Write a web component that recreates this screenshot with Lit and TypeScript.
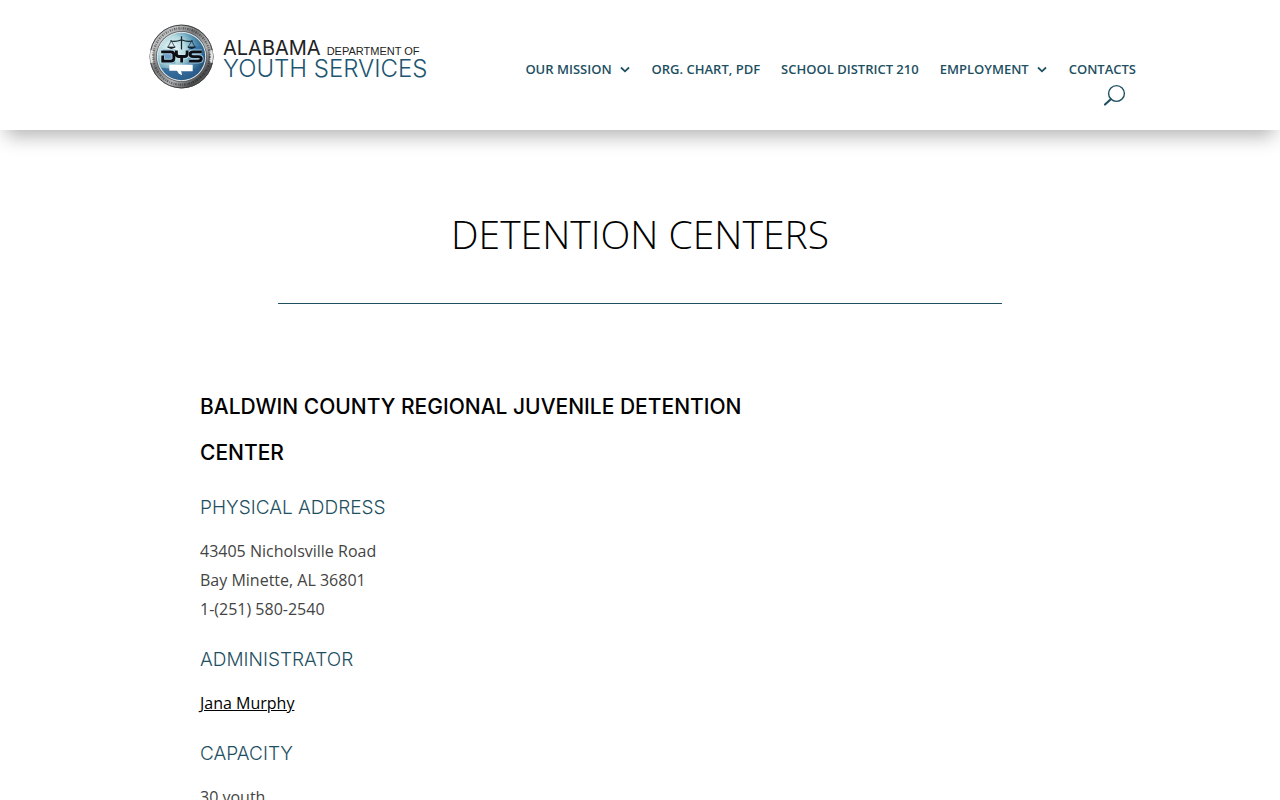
import { LitElement, html, css, svg } from "lit";
import { customElement } from "lit/decorators.js";

interface MenuItem {
  label: string;
  expandable?: boolean;
}

const MENU: MenuItem[] = [
  { label: "OUR MISSION", expandable: true },
  { label: "ORG. CHART, PDF" },
  { label: "SCHOOL DISTRICT 210" },
  { label: "EMPLOYMENT", expandable: true },
  { label: "CONTACTS" },
];

const chevron = html`<svg class="chevron" viewBox="0 0 10 7" aria-hidden="true">
  <path d="M1 1.5 5 5.300 9 1.5" fill="none" stroke="currentColor" stroke-width="1.8" />
</svg>`;

const seal = svg`
  <defs>
    <linearGradient id="rim" x1="0" y1="0" x2="1" y2="1">
      <stop offset="0" stop-color="#6a6c6e" />
      <stop offset=".2" stop-color="#c4c6c8" />
      <stop offset=".4" stop-color="#77797b" />
      <stop offset=".62" stop-color="#b5b7b9" />
      <stop offset=".8" stop-color="#4c4e50" />
      <stop offset="1" stop-color="#77797b" />
    </linearGradient>
    <radialGradient id="disc" cx=".3" cy=".35" r=".8">
      <stop offset="0" stop-color="#f4fafb" />
      <stop offset=".35" stop-color="#b4dae0" />
      <stop offset=".65" stop-color="#4a8aae" />
      <stop offset="1" stop-color="#163c60" />
    </radialGradient>
  </defs>
  <circle cx="32" cy="32" r="31.5" fill="url(#rim)" />
  <circle cx="32" cy="32" r="30.9" fill="none" stroke="#3a3a3a" stroke-width=".9" />
  <path d="M3 38a29.500 29.500 0 0 1 0-12M61 26a29.500 29.500 0 0 1 0 12" stroke="#e6e6e6" stroke-width="3" fill="none" />
  <circle cx="32" cy="32" r="27.800" fill="none" stroke="#1c1c1c" stroke-opacity=".5" stroke-width="2.200" stroke-dasharray="1.500 .9 .8 1.200" />
  <circle cx="32" cy="32" r="25" fill="#55595c" />
  <circle cx="32" cy="32" r="24.300" fill="#dfe5e8" />
  <circle cx="32" cy="32" r="23.300" fill="url(#disc)" />
  <path d="M14 25h12v14H13ZM39 22h12a22 22 0 0 1 2 17H39Z" fill="#2f6fb0" opacity=".6" />
  <path d="M12 43q7 12 20 12t20-12l-8 1H22Z" fill="#2c5f92" opacity=".75" />
  <path d="M32 12v13M21 16.500q5 1.500 11-1 6 2.500 11 1" fill="none" stroke="#16222b" stroke-width="1.200" />
  <path d="M22 16.500 18.500 23h7ZM42 16.500 38.500 23h7Z" fill="none" stroke="#16222b" stroke-width=".7" />
  <path d="M17.500 22.500h9q-4.500 4-9 0ZM37.500 22.500h9q-4.500 4-9 0Z" fill="#16222b" />
  <path d="M20 40h23v6.500H31.500q1 2 1 4l-3-1.500-2-3H20Z" fill="#fff" />
  <g fill="none" stroke="#d7eef5" stroke-opacity=".65" stroke-width="4.600">
    <path d="M13.500 31v5.500h8q3 0 3-2.500v-3.500q0-3-3-3H12M27 26v3.500q0 2.500 2.500 2.500H35q2.500 0 2.500-2.500V26M32.200 32v6M52 27.500h-8.500q-3 0-3 2.300t3 2.300h5q3 0 3 2.200t-3 2.200H39.500" />
  </g>
  <g fill="none" stroke="#0b0f14" stroke-width="2.800">
    <path d="M13.500 31v5.500h8q3 0 3-2.500v-3.500q0-3-3-3H12M27 26v3.500q0 2.500 2.500 2.500H35q2.500 0 2.500-2.500V26M32.200 32v6M52 27.500h-8.500q-3 0-3 2.300t3 2.300h5q3 0 3 2.200t-3 2.200H39.500" />
  </g>`;

@customElement("dys-header")
export class DysHeader extends LitElement {
  static styles = css`
    :host {
      display: block;
      position: relative;
      z-index: 1;
      background: #fff;
      box-shadow: 0 12px 18px -6px rgba(0, 0, 0, 0.3);
      color: #1e5062;
      font-family: "Open Sans", sans-serif;
    }
    .row {
      display: flex;
      justify-content: space-between;
      align-items: flex-start;
      width: 80%;
      margin: 0 auto;
      padding: 24px 16px 22px 21px;
      box-sizing: border-box;
    }
    .logo {
      display: flex;
      gap: 9px;
      flex: none;
      color: inherit;
      text-decoration: none;
    }
    .seal {
      width: 65px;
      height: 65px;
      flex: none;
    }
    .words {
      display: flex;
      flex-direction: column;
      padding-top: 15px;
      font-family: Inter, sans-serif;
      white-space: nowrap;
    }
    .upper {
      display: flex;
      align-items: baseline;
      gap: 6px;
      line-height: 19px;
      color: #222;
    }
    .state {
      font-size: 20px;
      font-weight: 400;
    }
    .dept {
      font-family: "Liberation Sans", sans-serif;
      font-size: 11px;
      line-height: 12px;
    }
    .lower {
      font-size: 24px;
      font-weight: 300;
      line-height: 21px;
      color: #1e5570;
    }
    .side {
      display: flex;
      flex-direction: column;
      align-items: flex-end;
      padding-top: 35px;
    }
    .menu {
      display: flex;
      gap: 21px;
      margin: 0;
      padding: 0;
      list-style: none;
    }
    .link {
      display: flex;
      align-items: center;
      gap: 8px;
      color: inherit;
      font-size: 13px;
      font-weight: 600;
      line-height: 20px;
      text-decoration: none;
      white-space: nowrap;
    }
    .chevron {
      width: 10px;
      height: 7px;
      margin-right: 1px;
    }
    .search {
      display: block;
      margin: 5px 10px 0 0;
      padding: 0;
      border: 0;
      background: none;
      color: inherit;
      cursor: pointer;
    }
    .glass {
      display: block;
      width: 24px;
      height: 24px;
    }
  `;

  render() {
    return html`
      <div class="row">
        <a class="logo" href="#" aria-label="Alabama Department of Youth Services">
          <svg class="seal" viewBox="0 0 64 64" aria-hidden="true">${seal}</svg>
          <span class="words">
            <span class="upper"><span class="state">ALABAMA</span><span class="dept">DEPARTMENT OF</span></span>
            <span class="lower">YOUTH SERVICES</span>
          </span>
        </a>
        <div class="side">
          <nav aria-label="Main">
            <ul class="menu">
              ${MENU.map(
                (item) => html`<li>
                  <a class="link" href="#">${item.label}${item.expandable ? chevron : ""}</a>
                </li>`
              )}
            </ul>
          </nav>
          <button class="search" type="button" aria-label="Search">
            <svg class="glass" viewBox="0 0 24 24" aria-hidden="true">
              <circle cx="14.500" cy="9.500" r="7.900" fill="none" stroke="currentColor" stroke-width="1.400" />
              <path d="M8.800 15.200 3 20.500" fill="none" stroke="currentColor" stroke-width="2.200" stroke-linecap="round" />
            </svg>
          </button>
        </div>
      </div>
    `;
  }
}

@customElement("app-root")
export class AppRoot extends LitElement {
  static styles = css`
    :host {
      display: block;
      height: 100vh;
      overflow: hidden;
      background: #fff;
      color: #444;
      font-family: "Open Sans", sans-serif;
      font-size: 16px;
      line-height: 29px;
    }
    .title {
      margin: 0;
      padding-top: 80px;
      color: #000;
      font-size: 39px;
      font-weight: 300;
      line-height: 48px;
      text-align: center;
    }
    .rule {
      width: 724px;
      max-width: 80%;
      height: 1px;
      margin: 45px auto 80px;
      border: 0;
      background: #1e5062;
    }
    .content {
      max-width: 880px;
      margin: 0 auto;
    }
    .center {
      max-width: 580px;
    }
    .name {
      margin: 0 0 14px;
      color: #000;
      font-family: Inter, sans-serif;
      font-size: 21px;
      font-weight: 500;
      line-height: 46px;
    }
    .label {
      margin: 0 0 11px;
      color: #1e5062;
      font-family: Inter, sans-serif;
      font-size: 19px;
      font-weight: 300;
      line-height: 36px;
    }
    .text {
      margin: 0 0 18px;
    }
    .person {
      color: #000;
      text-decoration: underline;
    }
  `;

  render() {
    return html`
      <dys-header></dys-header>
      <main>
        <h1 class="title">DETENTION CENTERS</h1>
        <hr class="rule" />
        <div class="content">
          <section class="center">
            <h2 class="name">BALDWIN COUNTY REGIONAL JUVENILE DETENTION CENTER</h2>
            <h3 class="label">PHYSICAL ADDRESS</h3>
            <p class="text">43405 Nicholsville Road<br />Bay Minette, AL 36801<br />1-(251) 580-2540</p>
            <h3 class="label">ADMINISTRATOR</h3>
            <p class="text"><a class="person" href="#">Jana Murphy</a></p>
            <h3 class="label">CAPACITY</h3>
            <p class="text">30 youth</p>
          </section>
        </div>
      </main>
    `;
  }
}
